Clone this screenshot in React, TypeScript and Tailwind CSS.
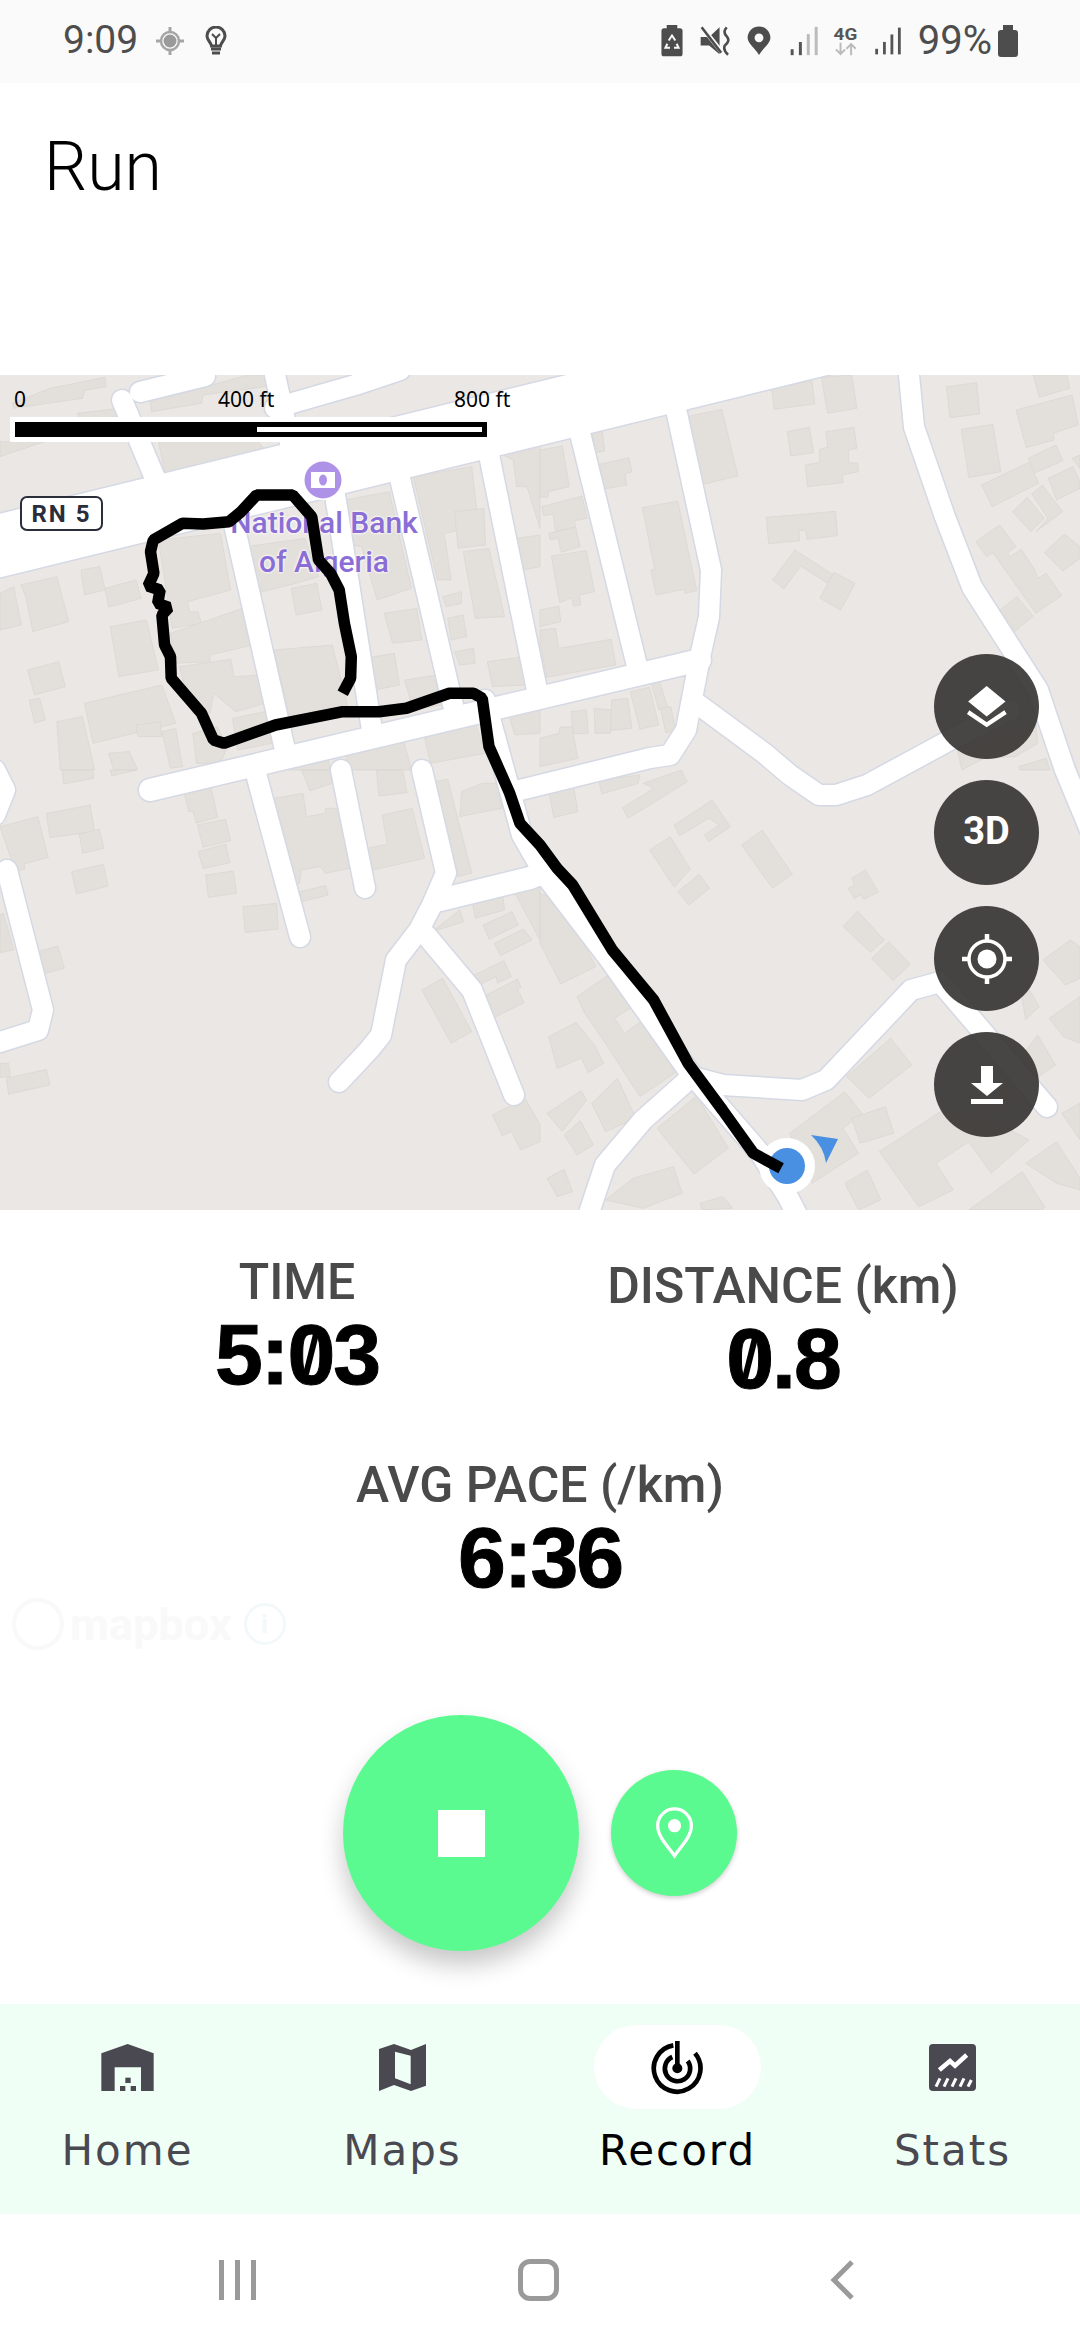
import React from "react";

const DARK = "#4a4850";

const buildingsA = [
  "35,100 145,55 305,22 308,50 245,62 240,85 40,115","225,130 345,115 350,140 230,150","435,90 500,78 580,55 720,15 775,15 770,50 590,75 585,100 440,125","480,315 770,240 750,215 460,215","0,215 130,215 0,260",
  "235,600 290,590 305,660 245,675","305,655 395,630 410,685 315,712","60,645 165,620 200,755 95,785 75,680","0,670 40,650 62,765 0,780","320,770 425,750 460,900 345,920","80,900 170,875 190,950 100,975","85,990 115,985 132,1050 100,1060","245,1000 470,945 510,1060 270,1120","165,1055 240,1040 275,1200 175,1200","315,1150 375,1145 400,1200 330,1200","395,1065 465,1055 470,1100 400,1100","470,1085 510,1075 530,1190 495,1195","560,1090 630,1070 660,1130 640,1180 570,1180","675,1045 770,1025 790,1120 690,1140",
  "460,510 640,490 670,660 545,695 550,725 575,725 585,760 500,775","495,790 705,715 735,825 610,855 610,875 505,880","520,890 670,868 680,920 755,915 770,1000 685,1025 620,970 610,1030 560,1030","715,530 885,505 925,620 860,640 745,670","845,655 920,640 935,720 860,735","795,840 965,825 1010,1010 840,1040","950,400 1130,365 1195,655 1095,690 1050,530 985,520","1115,730 1210,715 1225,810 1140,820","1060,865 1145,850 1160,945 1090,960","1175,930 1270,915 1285,1005 1200,1020","1200,320 1370,290 1390,470 1290,490 1310,630 1270,630","1320,425 1405,415 1410,525 1330,535","1345,545 1420,535 1465,740 1380,745","1285,680 1340,665 1340,700 1295,710","1300,745 1345,735 1355,800 1310,810","1320,845 1375,835 1380,880 1335,885","1415,875 1520,860 1525,945 1430,950","1450,250 1568,225 1568,475 1530,350 1500,350 1490,270","1500,505 1568,495 1568,590 1520,600","1475,1030 1568,1015 1568,1090 1495,1095","1230,1090 1380,1060 1410,1150 1250,1180","1000,1150 1170,1105 1195,1200 1020,1200","770,1180 950,1160 960,1200 780,1200",
];
const buildingsB = [
  "672,50 790,33 798,102 680,118","817,22 905,15 920,115 835,130","425,140 528,118 575,318 465,345","1180,50 1268,38 1277,132 1190,143","1432,15 1530,15 1538,55 1450,82","1382,120 1545,75 1563,165 1490,190 1493,210 1412,233","1223,178 1315,163 1338,305 1245,323","1418,265 1498,225 1518,272 1438,308","1545,265 1568,255 1568,295","1282,345 1420,277 1448,340 1313,410","1476,325 1547,290 1568,335 1568,355 1500,390","1372,425 1415,382 1465,445 1425,485","1428,372 1458,345 1518,425 1440,485 1475,445","718,185 782,172 795,248 728,258","830,185 912,172 920,235 895,240 897,278 923,280 925,305 878,315 880,338 777,350 770,285 812,277 812,238 835,232","657,442 858,424 864,497 775,508 772,480 752,482 754,513 664,521","675,630 740,540 850,613 835,640 757,588 708,657","853,607 915,640 873,720 813,685","1265,515 1335,465 1382,530 1358,548 1365,560 1397,538 1437,600 1445,625 1470,610 1515,677 1440,730 1315,548 1297,560","1465,548 1522,492 1568,530 1568,565 1518,603","1330,725 1385,680 1432,738 1375,788","0,240 65,228 85,350 25,365 22,382 0,382","5,410 122,378 137,445 100,453 103,470 45,485 38,432 10,437","25,490 103,472 117,530 62,547 52,505 30,510","33,558 135,542 158,665 115,675 118,705 97,708 93,683 57,698","0,720 55,708 60,755 0,770","0,780 45,775 55,835 207,808 220,885 20,922 0,820","150,180 180,175 188,243 160,248","165,285 258,263 267,305 247,312 252,345 180,358","297,413 400,393 455,662 422,670 418,658 337,675 322,600 333,598","90,1025 135,1020 140,1090 97,1092","157,1015 208,1020 205,1090 160,1090","208,990 255,985 267,1075 205,1082","262,965 318,952 345,1065 290,1078","320,930 345,928 372,1015 345,1020","350,1015 380,1010 393,1080 365,1088","0,1105 55,1090 58,1072 93,1070 110,1165 0,1190","1390,1190 1470,1165 1480,1200 1395,1200","1210,1130 1440,1060 1445,1120 1380,1160 1290,1165 1225,1200",
];
const buildingsC = [
  "180,0 270,0 272,25 185,42","320,0 395,0 325,18","135,130 262,105 275,185 145,203","230,192 288,178 302,235 240,250","0,170 110,140 140,262 70,282 72,298 45,305","208,305 300,283 314,348 222,372","110,545 168,528 187,595 125,612","0,435 10,430 40,540 0,548","0,880 25,880 30,920 0,922","18,925 135,898 145,945 25,973","530,50 610,40 632,142 570,160 560,125 548,125","573,165 655,148 670,212 590,232","575,245 655,222 668,278 590,296","597,315 678,303 687,370 605,382","705,410 803,400 808,477 712,488","795,85 880,70 890,140 945,130 945,115 985,115 1015,295 945,310 930,290 875,300 870,340 850,340 840,270","870,365 945,347 953,375 875,395","875,0 960,0 965,40 900,62","1093,0 1170,0 1182,68 1100,78","1110,135 1197,115 1233,265 1075,302 1068,235 1125,222 1118,185","1260,35 1300,28 1370,310 1330,320 1265,60","1340,65 1400,40 1445,40 1458,115 1335,140","1225,660 1285,625 1370,785 1310,820","1255,485 1335,420 1347,455","1370,390 1458,365 1465,420 1380,445","1403,465 1487,425 1505,465 1420,508","1435,520 1520,477 1545,510 1453,557","1368,620 1463,572 1485,620 1445,640 1440,620 1385,648","1403,680 1503,627 1513,652 1503,658 1522,698 1430,745","1430,1035 1525,985 1568,1065 1568,1115 1512,1140 1485,1085 1458,1097","1480,340 1568,330 1568,510",
];
const buildingsD = [
  "25,60 97,45 110,125 40,143","170,30 290,15 285,40 180,72","240,113 330,55 300,40 410,0 428,35 335,95 255,145","390,165 500,90 553,170 490,215 477,195 520,165 490,145 405,198","318,240 378,200 437,297 415,322 390,352","400,365 462,313 493,355 432,405","585,225 645,180 733,313 675,355","905,325 945,300 983,367 940,388 932,375 912,385 895,355 913,345","880,470 922,423 1000,510 960,547","963,565 1013,515 1075,583 1025,632","0,370 65,395 162,590 60,642 0,520","107,680 203,612 268,710 217,745 245,790 293,755 397,905 290,980 190,820 130,730","25,800 105,757 158,825 185,880 140,908 120,865 50,895","20,1030 120,962 135,990 65,1085","70,1095 117,1052 155,1125 108,1155","150,1000 225,925 278,1045 190,1085","340,1075 455,978 547,1135 447,1212","20,1225 70,1198 95,1265 50,1280","190,1290 270,1225 388,1190 413,1270 300,1315","465,1300 530,1280 560,1315 470,1320","890,920 1018,805 1080,885 955,985","725,1090 885,965 935,1030 880,1075 925,1150 790,1240","905,1045 1003,1010 1027,1090 930,1120","985,1145 1170,1020 1290,1040 1420,1110 1310,1210 1245,1115 1150,1180 1200,1260 1100,1310","885,1240 950,1200 990,1290 925,1320","1460,570 1540,510 1568,530 1568,625 1525,645","1478,745 1568,680 1568,820 1520,800","1390,870 1445,795 1497,885 1440,925","1245,1320 1400,1205 1465,1310 1460,1320","1410,1180 1500,1115 1568,1225 1568,1260 1500,1240","1515,1030 1568,1000 1568,1110","1395,660 1415,650 1450,710 1410,748","1280,1030 1350,930 1400,990 1300,1045",
];

const roads: [string, number][] = [
  ["-10,548 840,340", 62],
  ["122,400 160,490", 20],
  ["140,392 205,376", 20],
  ["275,408 355,385 400,370", 20],
  ["275,375 296,470", 20],
  ["233,520 285,750", 20],
  ["335,495 372,730", 20],
  ["398,470 453,705", 20],
  ["487,445 537,690", 20],
  ["578,425 638,670", 20],
  ["674,400 711,570 709,617 700,657 686,730 670,755 650,758 520,790", 20],
  ["150,790 700,660", 22],
  ["909,375 914,427 945,517 972,587 1038,690 1065,770 1090,830", 20],
  ["699,705 764,753 790,775 819,795 836,795 867,785 950,740 1010,710", 20],
  ["255,770 300,937", 20],
  ["341,770 365,888", 20],
  ["422,770 446,873 432,905 419,930 396,960 381,1035 369,1050 339,1082", 20],
  ["426,935 472,990 514,1095", 20],
  ["440,900 530,878 545,872", 22],
  ["485,700 522,835 545,875 610,960 688,1070 760,1153 788,1197 805,1230", 20],
  ["696,1078 723,1085 802,1090 826,1080 911,990 940,982", 20],
  ["940,982 1047,1107", 20],
  ["688,1080 643,1120 605,1165 585,1225", 20],
  ["7,870 43,1010 38,1030 0,1042", 20],
  ["-5,770 5,790 -5,815", 20],
];

const z = (ox: number, oy: number, p: number[][]) =>
  p.map(([x, y]) => `${(ox + x * 0.3444).toFixed(1)},${(oy + y / 3).toFixed(1)}`);

const track = [
  ...z(0, 370, [[995,970],[1018,925],[1020,860],[1000,760],[985,660],[960,610],[925,570],[905,440],[850,375],[745,375],[700,425],[665,455],[590,462],[530,460],[445,510],[437,545],[447,610],[430,648],[465,660],[458,700],[490,712],[470,735],[478,825],[495,860],[497,925],[585,1030],[620,1110],[650,1120],[800,1065],[995,1025],[1100,1025],[1180,1015],[1305,970],[1375,970],[1400,985],[1420,1130],[1450,1200]]),
  ...z(0, 770, [[1480,70],[1510,160],[1568,225]]),
  ...z(540, 770, [[50,295],[95,345],[210,540],[250,590],[330,690],[430,880],[530,1020],[620,1150],[700,1195]]),
].join(" ");

function MapArt() {
  const B = (list: string[], ox: number, oy: number) => (
    <g transform={`translate(${ox},${oy}) scale(0.3444,0.3333)`}>
      {list.map((p, i) => (
        <polygon key={i} points={p} fill="#e3dfdb" stroke="#d9d5d1" strokeWidth="2" />
      ))}
    </g>
  );
  return (
    <svg width="1080" height="835" viewBox="0 375 1080 835" className="block">
      <rect x="0" y="375" width="1080" height="835" fill="#ebe7e4" />
      {B(buildingsA, 0, 370)}
      {B(buildingsB, 540, 370)}
      {B(buildingsC, 0, 770)}
      {B(buildingsD, 540, 770)}
      <g fill="none" strokeLinecap="round" strokeLinejoin="round">
        {roads.map(([p, w], i) => (
          <polyline key={i} points={p} stroke="#d4d9e4" strokeWidth={w + 3} />
        ))}
        {roads.map(([p, w], i) => (
          <polyline key={i} points={p} stroke="#ffffff" strokeWidth={w} />
        ))}
      </g>
      <circle cx="323" cy="480" r="20" fill="#ffffff" />
      <circle cx="323" cy="480" r="18.5" fill="#ae92e8" />
      <rect x="311" y="472" width="24" height="16" fill="#ffffff" />
      <ellipse cx="323" cy="480" rx="4" ry="5.5" fill="#ae92e8" />
      <circle cx="787" cy="1166" r="28" fill="#ffffff" />
      <circle cx="787" cy="1166" r="18" fill="#4a90e2" />
      <path d="M811,1135 L838,1139 L826,1163 Q824,1147 811,1135 Z" fill="#4a90e2" />
    </svg>
  );
}

function MapButton({ children }: { children: React.ReactNode }) {
  return (
    <div className="flex h-[105px] w-[105px] items-center justify-center rounded-full bg-[#343230]/90">
      {children}
    </div>
  );
}

function Slashed() {
  return (
    <span className="relative inline-block">
      0
      <span className="absolute left-[21px] top-[15px] h-[42px] w-[6px] rotate-[14deg] bg-black" />
    </span>
  );
}

function NavItem({ label, active, children }: { label: string; active?: boolean; children: React.ReactNode }) {
  return (
    <div className="flex flex-col items-center pt-[21px]">
      <div className={`flex h-[84px] w-[167px] items-center justify-center rounded-[42px] ${active ? "bg-white" : ""}`}>
        {children}
      </div>
      <div
        className={`mt-[17px] text-[42px] leading-[50px] tracking-[2px] ${active ? "text-black" : "text-[#4a4850]"}`}
        style={{ fontFamily: '"DejaVu Sans", sans-serif' }}
      >
        {label}
      </div>
    </div>
  );
}

export default function App() {
  return (
    <div className="flex h-[2340px] w-[1080px] flex-col overflow-hidden bg-white" style={{ fontFamily: 'Roboto, sans-serif' }}>
      {/* status bar */}
      <div className="flex h-[83px] shrink-0 items-center bg-[#fafafa] pl-[63px] pr-[62px] pb-[2px] text-[#4d4d4d]">
        <span className="text-[39px] leading-none">9:09</span>
        <svg width="28" height="30" viewBox="0 0 28 30" className="ml-[18px]">
          <circle cx="14" cy="15" r="9" fill="none" stroke="#a5a5a5" strokeWidth="2.5" />
          <circle cx="14" cy="15" r="6.5" fill="#9a9a9a" />
          <path d="M14 1V6M14 24V29M0 15H5M23 15H28" stroke="#a5a5a5" strokeWidth="3" />
        </svg>
        <svg width="22" height="30" viewBox="0 0 22 30" className="ml-[21px]">
          <path d="M6.5 20C6 16 2 14.5 2 10A9 9 0 0 1 20 10C20 14.5 16 16 15.5 20Z" fill="none" stroke="#4d4d4d" strokeWidth="3" />
          <path d="M7 8L11 12L15 8M11 12V19" fill="none" stroke="#4d4d4d" strokeWidth="2" />
          <path d="M6 23H16M7 27H15" stroke="#4d4d4d" strokeWidth="3" />
        </svg>
        <div className="ml-auto flex items-center">
          <svg width="22" height="32" viewBox="24 15 64 97">
            <rect x="24" y="25" width="64" height="85" rx="8" fill="#4d4d4d" />
            <rect x="40" y="15" width="32" height="12" fill="#4d4d4d" />
            <path d="M46 62L56 47L66 62M70 72L76 84L62 84M50 84L36 84L42 72" fill="none" stroke="#fafafa" strokeWidth="6" />
          </svg>
          <svg width="30" height="30" viewBox="140 18 92 92" className="ml-[17px]">
            <path d="M142 52H168L200 22V105L168 78H142Z" fill="#4d4d4d" />
            <path d="M145 20L210 102" stroke="#fafafa" strokeWidth="14" />
            <path d="M145 22L205 100" stroke="#4d4d4d" strokeWidth="8" />
            <path d="M222 22Q208 36 222 50Q234 64 216 78Q210 92 226 106" fill="none" stroke="#4d4d4d" strokeWidth="8" />
          </svg>
          <svg width="24" height="30" viewBox="278 18 76 92" className="ml-[17px]">
            <path d="M316 108C302 86 280 72 280 54A36 36 0 0 1 352 54C352 72 330 86 316 108Z" fill="#4d4d4d" />
            <circle cx="316" cy="54" r="14" fill="#fafafa" />
          </svg>
          <svg width="28" height="30" viewBox="410 20 85 90" className="ml-[19px]">
            <rect x="412" y="90" width="9" height="18" fill="#555555" />
            <rect x="437" y="68" width="9" height="40" fill="#555555" />
            <rect x="461" y="44" width="9" height="64" fill="#bbbbbb" />
            <rect x="485" y="22" width="9" height="86" fill="#bbbbbb" />
          </svg>
          <svg width="25" height="31" viewBox="543 18 72 94" className="ml-[15px]">
            <text x="543" y="62" fontSize="52" fontWeight="700" fill="#555555" textLength="72" lengthAdjust="spacingAndGlyphs" fontFamily="Roboto, sans-serif">4G</text>
            <path d="M564 72V106M550 92L564 106L578 92M596 110V76M582 90L596 76L610 90" fill="none" stroke="#bbbbbb" strokeWidth="6" />
          </svg>
          <svg width="28" height="30" viewBox="660 20 90 90" className="ml-[16px]">
            <rect x="664" y="90" width="9" height="18" fill="#555555" />
            <rect x="689" y="68" width="9" height="40" fill="#555555" />
            <rect x="713" y="44" width="9" height="64" fill="#555555" />
            <rect x="737" y="22" width="9" height="86" fill="#555555" />
          </svg>
          <span className="ml-[16px] text-[40px] leading-none">99%</span>
          <svg width="20" height="32" viewBox="0 0 20 32" className="ml-[6px]">
            <rect x="0" y="5" width="20" height="27" rx="3" fill="#4d4d4d" />
            <rect x="5" y="0" width="10" height="6" fill="#4d4d4d" />
          </svg>
        </div>
      </div>

      {/* title */}
      <div className="h-[292px] shrink-0 pl-[44px] pt-[40px]">
        <h1 className="text-[68px] font-light leading-[88px] text-black">Run</h1>
      </div>

      {/* map */}
      <div className="relative h-[835px] shrink-0 overflow-hidden">
        <MapArt />
        <div className="absolute left-[14px] top-[10px] text-[21px] leading-[28px] text-black" style={{ fontFamily: '"Noto Sans", sans-serif' }}>0</div>
        <div className="absolute left-[218px] top-[10px] text-[21px] leading-[28px] text-black" style={{ fontFamily: '"Noto Sans", sans-serif' }}>400 ft</div>
        <div className="absolute left-[454px] top-[10px] text-[21px] leading-[28px] text-black" style={{ fontFamily: '"Noto Sans", sans-serif' }}>800 ft</div>
        <div className="absolute left-[10px] top-[42px] h-[25px] w-[482px] bg-white p-[5px]">
          <div className="flex h-[15px] w-[472px] bg-black p-[5px] pl-[242px]">
            <div className="h-[5px] flex-1 bg-white" />
          </div>
        </div>
        <div className="absolute left-[20px] top-[121px] flex h-[35px] w-[83px] items-center justify-center rounded-[7px] border-[2px] border-[#2a2d3a] bg-white text-[24px] font-bold tracking-[2px] text-[#2a2d3a]">
          RN 5
        </div>
        <div
          className="absolute left-[204px] top-[128px] w-[240px] text-center text-[30px] font-medium leading-[39px] text-[#8a6ed6]"
          style={{ textShadow: "0 0 3px #fff, 0 0 3px #fff" }}
        >
          National Bank
          <br />
          of Algeria
        </div>
        {/* the track passes over the label */}
        <svg width="1080" height="835" viewBox="0 375 1080 835" className="pointer-events-none absolute left-0 top-0">
          <polyline points={track} fill="none" stroke="#000000" strokeWidth="11.5" strokeLinejoin="bevel" />
        </svg>
        <div className="absolute left-[934px] top-[279px] flex flex-col gap-[21px]">
          <MapButton>
            <svg width="43" height="43" viewBox="1230 940 125 130">
              <polygon points="1293,943 1350,990 1293,1035 1237,990" fill="#fff" />
              <polyline points="1237,1022 1293,1060 1350,1022" fill="none" stroke="#fff" strokeWidth="13" />
            </svg>
          </MapButton>
          <MapButton>
            <span className="-mt-[4px] text-[38px] font-bold leading-none text-white">3D</span>
          </MapButton>
          <MapButton>
            <svg width="50" height="50" viewBox="0 0 50 50">
              <circle cx="25" cy="25" r="18" fill="none" stroke="#fff" strokeWidth="3.5" />
              <circle cx="25" cy="25" r="9.5" fill="#fff" />
              <path d="M25 0V7M25 43V50M0 25H7M43 25H50" stroke="#fff" strokeWidth="4.5" />
            </svg>
          </MapButton>
          <MapButton>
            <svg width="32" height="38" viewBox="0 0 32 38">
              <polygon points="10,0 22,0 22,17 32,17 16,30 0,17 10,17" fill="#fff" />
              <rect x="0" y="33" width="32" height="5" fill="#fff" />
            </svg>
          </MapButton>
        </div>
      </div>

      {/* stats */}
      <div className="relative h-[794px] shrink-0">
        <div className="absolute left-[12px] top-[388px] flex items-center gap-[6px] text-[45px] font-bold leading-none text-[#f9f9f9]">
          <span className="h-[52px] w-[52px] rounded-full border-[4px] border-[#f9f9f9]" />
          <span>mapbox</span>
          <span className="ml-[6px] flex h-[42px] w-[42px] items-center justify-center rounded-full border-[3px] border-[#f3f8fb] text-[26px] text-[#f3f8fb]">i</span>
        </div>
        <div className="relative grid grid-cols-2 px-[54px]">
          <div className="flex flex-col items-center pt-[48px]">
            <div className="text-[50px] font-medium leading-[48px] text-[#4a4a4a]">TIME</div>
            <div className="mt-[12px] text-[86px] font-bold leading-[72px] tracking-[-2px] text-black [-webkit-text-stroke:1px_black]" style={{ fontFamily: '"Liberation Sans", sans-serif' }}>
              5:<Slashed />3
            </div>
          </div>
          <div className="flex flex-col items-center pt-[52px]">
            <div className="text-[50px] font-medium leading-[48px] text-[#4a4a4a]">DISTANCE (km)</div>
            <div className="mt-[12px] text-[86px] font-bold leading-[72px] tracking-[-2px] text-black [-webkit-text-stroke:1px_black]" style={{ fontFamily: '"Liberation Sans", sans-serif' }}>
              <Slashed />.8
            </div>
          </div>
        </div>
        <div className="relative flex flex-col items-center pt-[67px]">
          <div className="text-[50px] font-medium leading-[48px] text-[#4a4a4a]">AVG PACE (/km)</div>
          <div className="mt-[12px] text-[86px] font-bold leading-[72px] tracking-[-2px] text-black [-webkit-text-stroke:1px_black]" style={{ fontFamily: '"Liberation Sans", sans-serif' }}>
            6:36
          </div>
        </div>
        <div className="relative mt-[122px] flex items-center gap-[32px] pl-[343px]">
          <div className="flex h-[236px] w-[236px] items-center justify-center rounded-full bg-[#5bfa90] shadow-[0_14px_24px_rgba(0,0,0,0.22)]">
            <div className="h-[47px] w-[47px] bg-white" />
          </div>
          <div className="flex h-[126px] w-[126px] items-center justify-center rounded-full bg-[#5bfa90] shadow-[0_2px_5px_rgba(0,0,0,0.2)]">
            <svg width="39" height="54" viewBox="1065 378 118 162">
              <path d="M1124 528C1105 500 1073 470 1073 437A51 51 0 0 1 1175 437C1175 470 1143 500 1124 528Z" fill="none" stroke="#fff" strokeWidth="10" />
              <circle cx="1124" cy="437" r="20" fill="#fff" />
            </svg>
          </div>
        </div>
      </div>

      {/* bottom navigation */}
      <div className="h-[210px] shrink-0 overflow-hidden bg-[#effff6]">
        <div className="-mx-[10px] grid grid-cols-4">
          <NavItem label="Home">
            <svg width="53" height="47" viewBox="33 27 157 141">
              <path fill={DARK} d="M33 55L112 27L190 55V168H152V97H73V168H33Z" />
              <rect x="105" y="128" width="16" height="16" fill={DARK} />
              <rect x="89" y="153" width="16" height="15" fill={DARK} />
              <rect x="121" y="153" width="16" height="15" fill={DARK} />
            </svg>
          </NavItem>
          <NavItem label="Maps">
            <svg width="47" height="47" viewBox="867 27 141 141">
              <path fill={DARK} fillRule="evenodd" d="M867 42L912 27L963 45L1008 27V152L963 168L912 150L867 168ZM915 50V130L962 148V62Z" />
            </svg>
          </NavItem>
          <NavItem label="Record" active>
            <svg width="55" height="55" viewBox="30 15 165 165">
              <g fill="none" stroke="#000" strokeWidth="14">
                <path d="M100 31A70 70 0 1 0 165 55" />
                <path d="M97 66A38 38 0 1 0 143 78" />
                <path d="M112 18V100" />
              </g>
              <circle cx="112" cy="100" r="15" fill="#000" />
            </svg>
          </NavItem>
          <NavItem label="Stats">
            <svg width="47" height="47" viewBox="867 27 141 141">
              <rect x="867" y="27" width="141" height="141" rx="12" fill={DARK} />
              <polyline points="898,105 930,78 945,92 980,60" fill="none" stroke="#fff" strokeWidth="14" />
              <path d="M888 155L900 130M912 155L924 130M936 155L948 130M960 155L972 130M984 155L994 135" stroke="#fff" strokeWidth="9" />
            </svg>
          </NavItem>
        </div>
      </div>

      {/* system navigation */}
      <div className="flex h-[126px] shrink-0 items-center bg-white pl-[219px] pt-[6px]">
        <svg width="37" height="40" viewBox="0 0 37 40">
          <path d="M2.5 0V40M18.5 0V40M34.5 0V40" stroke="#9a9a9a" strokeWidth="5" />
        </svg>
        <div className="ml-[262px] h-[42px] w-[41px] rounded-[12px] border-[5px] border-[#9a9a9a]" />
        <svg width="24" height="40" viewBox="0 0 24 40" className="ml-[271px]">
          <path d="M22 2L4 20L22 38" fill="none" stroke="#9a9a9a" strokeWidth="5" />
        </svg>
      </div>
    </div>
  );
}
